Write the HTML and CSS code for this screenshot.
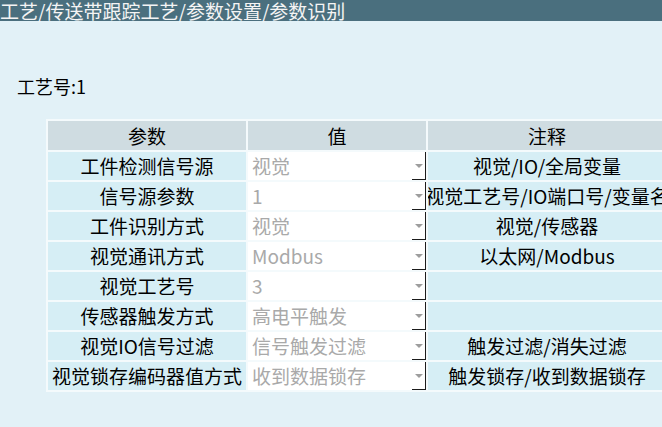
FILE: index.html
```html
<!DOCTYPE html>
<html lang="zh-CN">
<head>
    <meta charset="UTF-8">
    <title>参数识别</title>
    <link rel="stylesheet" href="styles.css">
</head>
<body>
    <div class="title-bar">工艺/传送带跟踪工艺/参数设置/参数识别</div>
    <div class="craft-no">工艺号:1</div>
    <table class="param-table">
        <tr class="head">
            <th class="col-name">参数</th>
            <th class="col-value">值</th>
            <th class="col-note">注释</th>
        </tr>
        <tr>
            <td class="name">工件检测信号源</td>
            <td><div class="combo"><span class="combo-text">视觉</span><span class="drop"></span></div></td>
            <td><div class="note">视觉/IO/全局变量</div></td>
        </tr>
        <tr>
            <td class="name">信号源参数</td>
            <td><div class="combo"><span class="combo-text">1</span><span class="drop"></span></div></td>
            <td><div class="note">视觉工艺号/IO端口号/变量名</div></td>
        </tr>
        <tr>
            <td class="name">工件识别方式</td>
            <td><div class="combo"><span class="combo-text">视觉</span><span class="drop"></span></div></td>
            <td><div class="note">视觉/传感器</div></td>
        </tr>
        <tr>
            <td class="name">视觉通讯方式</td>
            <td><div class="combo"><span class="combo-text">Modbus</span><span class="drop"></span></div></td>
            <td><div class="note">以太网/Modbus</div></td>
        </tr>
        <tr>
            <td class="name">视觉工艺号</td>
            <td><div class="combo"><span class="combo-text">3</span><span class="drop"></span></div></td>
            <td><div class="note"></div></td>
        </tr>
        <tr>
            <td class="name">传感器触发方式</td>
            <td><div class="combo"><span class="combo-text">高电平触发</span><span class="drop"></span></div></td>
            <td><div class="note"></div></td>
        </tr>
        <tr>
            <td class="name">视觉IO信号过滤</td>
            <td><div class="combo"><span class="combo-text">信号触发过滤</span><span class="drop"></span></div></td>
            <td><div class="note">触发过滤/消失过滤</div></td>
        </tr>
        <tr>
            <td class="name">视觉锁存编码器值方式</td>
            <td><div class="combo"><span class="combo-text">收到数据锁存</span><span class="drop"></span></div></td>
            <td><div class="note">触发锁存/收到数据锁存</div></td>
        </tr>
    </table>
</body>
</html>
```

FILE: styles.css
```css
body {
    margin: 0;
    width: 662px;
    height: 427px;
    overflow: hidden;
    background-color: #e2f1f7;
    font-family: "Noto Sans CJK SC", "Noto Sans", sans-serif;
    color: #000;
}
.title-bar {
    height: 21px;
    line-height: 21px;
    background-color: #4a6f7e;
    color: #f4f4f4;
    font-size: 19px;
    white-space: nowrap;
}
.craft-no {
    padding: 52px 0 0 17px;
    height: 26px;
    line-height: 26px;
    font-size: 18px;
}
.param-table {
    width: 622px;
    margin: 20px 0 0 46px;
    border-collapse: separate;
    border-spacing: 2px;
    background-color: #f4fafc;
    font-size: 19px;
    line-height: 28px;
    table-layout: fixed;
}
.param-table th,
.param-table td {
    padding: 0;
    height: 28px;
    font-weight: normal;
    white-space: nowrap;
    overflow: hidden;
}
.head th {
    height: 29px;
    line-height: 29px;
    background-color: #cfdce1;
    text-align: center;
}
.col-name { width: 198px; }
.col-value { width: 178px; }
.col-note { width: 238px; }
.name {
    background-color: #d6eef5;
    text-align: center;
}
.combo {
    display: flex;
    height: 28px;
    background-color: #ffffff;
}
.combo-text {
    flex: 1;
    padding-left: 4px;
    color: #a9a9a9;
}
.drop {
    display: flex;
    align-items: center;
    justify-content: center;
    width: 14px;
    border-right: 1px solid #1c1c1c;
    border-bottom: 1px solid #1c1c1c;
    box-sizing: border-box;
}
.drop::after {
    content: "";
    border-left: 4px solid transparent;
    border-right: 4px solid transparent;
    border-top: 4px solid #9d9d9d;
}
.note {
    display: flex;
    justify-content: center;
    align-items: center;
    width: 238px;
    height: 28px;
    overflow: hidden;
    background-color: #d6eef5;
}
```
